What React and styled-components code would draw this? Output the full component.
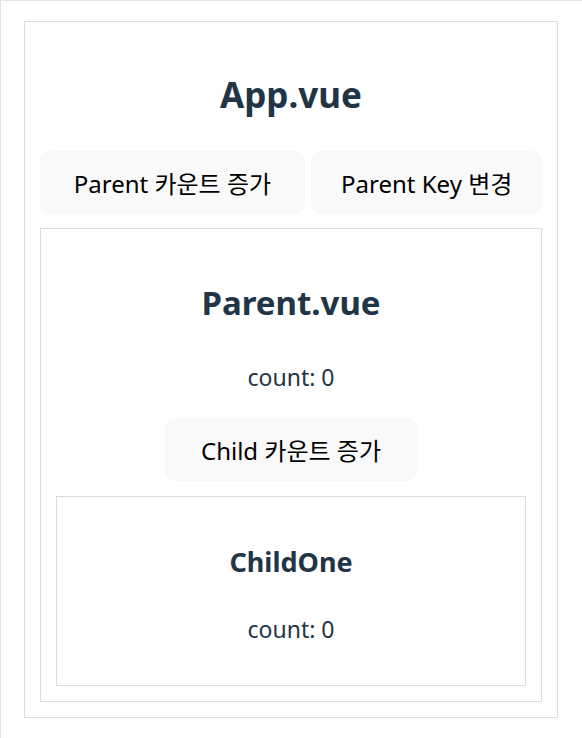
import React, { useState } from 'react';
import styled, { createGlobalStyle } from 'styled-components';

const GlobalStyle = createGlobalStyle`
  html, body {
    margin: 0;
    padding: 0;
    background: #ffffff;
  }
  body {
    font-family: 'Noto Sans', 'Noto Sans CJK KR', sans-serif;
    color: #213547;
    font-size: 20px;
  }
`;

const Page = styled.div`
  min-height: 738px;
  box-sizing: border-box;
  border-top: 1px solid #dfe3e8;
  border-left: 1px solid #dfe3e8;
  padding: 20px 24px 20px 23px;
`;

const Box = styled.div`
  border: 1px solid #dcdcdc;
  padding: 15px;
  text-align: center;
`;

const Title = styled.h1`
  margin: 35px 0 33px;
  font-size: 35px;
  line-height: 46px;
  font-weight: 700;
  color: #213547;
`;

const SubTitle = styled.h2`
  margin: 39px 0 40px;
  font-size: 33px;
  line-height: 40px;
  font-weight: 700;
  color: #213547;
`;

const SmallTitle = styled.h3`
  margin: 34px 0 37px;
  font-size: 27px;
  line-height: 32px;
  font-weight: 700;
  color: #213547;
`;

const Count = styled.p`
  margin: 0 0 ${p => p.$after}px;
  font-size: 23px;
  line-height: 28px;
  color: #213547;
`;

const ButtonRow = styled.div`
  display: flex;
  justify-content: center;
  gap: 6px;
  margin-bottom: 14px;
`;

const Button = styled.button`
  flex-shrink: 0;
  height: 63px;
  padding: 0 ${p => p.$pad || 31}px;
  border: 1px solid transparent;
  border-radius: 10px;
  background: #f9f9f9;
  color: #000000;
  font-family: inherit;
  font-size: 24px;
  white-space: nowrap;
  cursor: pointer;
  margin-bottom: ${p => p.$after || 0}px;
`;

function ChildOne() {
  return (
    <Box>
      <SmallTitle>ChildOne</SmallTitle>
      <Count $after={27}>count: 0</Count>
    </Box>
  );
}

function Parent({ count, onChild }) {
  return (
    <Box>
      <SubTitle>Parent.vue</SubTitle>
      <Count $after={27}>count: {count}</Count>
      <Button $pad={35} $after={15} onClick={onChild}>Child 카운트 증가</Button>
      <ChildOne />
    </Box>
  );
}

export default function App() {
  const [count, setCount] = useState(0);
  const [key, setKey] = useState(0);

  return (
    <>
      <GlobalStyle />
      <Page>
        <Box>
          <Title>App.vue</Title>
          <ButtonRow>
            <Button $pad={33} onClick={() => setCount(c => c + 1)}>Parent 카운트 증가</Button>
            <Button $pad={29} onClick={() => setKey(k => k + 1)}>Parent Key 변경</Button>
          </ButtonRow>
          <Parent key={key} count={count} onChild={() => {}} />
        </Box>
      </Page>
    </>
  );
}
